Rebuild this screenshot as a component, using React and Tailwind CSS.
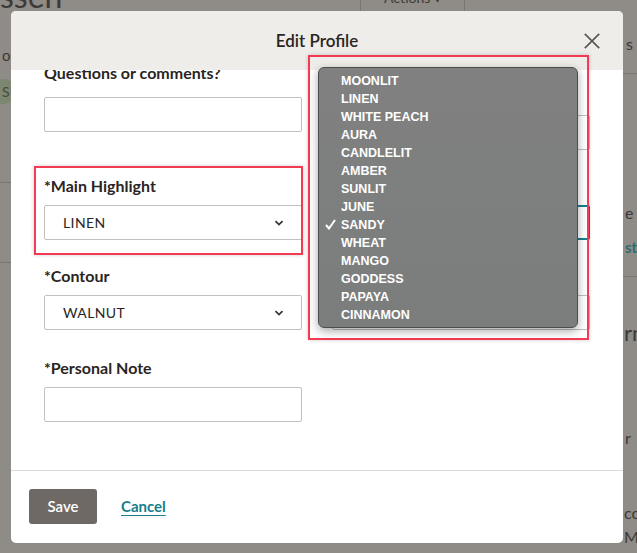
import React from 'react';

const shades = [
  'MOONLIT', 'LINEN', 'WHITE PEACH', 'AURA', 'CANDLELIT', 'AMBER', 'SUNLIT',
  'JUNE', 'SANDY', 'WHEAT', 'MANGO', 'GODDESS', 'PAPAYA', 'CINNAMON',
];

const Chevron = () => (
  <svg width="10" height="6" viewBox="0 0 10 6" className="shrink-0">
    <path d="M1.5 1.2 L5 4.6 L8.5 1.2" fill="none" stroke="#3a3532" strokeWidth="1.8" />
  </svg>
);

const Label = ({ children, className = '', mb = 'mb-[8px]' }) => (
  <div className={`h-[22px] leading-[22px] text-[16px] font-bold text-[#2a2522] ${mb} ${className}`}>
    {children}
  </div>
);

const SelectBox = ({ value, focused }) => (
  <div
    className={`h-[35px] flex items-center justify-between pl-[18px] pr-[17px] bg-white border rounded-[2px] ${
      focused ? 'border-[#1a7f8b] border-2' : 'border-[#c2c0bd]'
    }`}
  >
    <span className="text-[14px] tracking-[0.4px] text-[#2a2522]">{value}</span>
    {value && <Chevron />}
  </div>
);

const TextBox = () => (
  <div className="h-[35px] bg-white border border-[#c2c0bd] rounded-[2px]" />
);

export default function App() {
  return (
    <div
      className="relative w-[637px] h-[553px] overflow-hidden bg-[#8f8b87]"
      style={{ fontFamily: 'Lato, "Open Sans", sans-serif' }}
    >
      {/* page behind the overlay */}
      <div className="absolute left-0 top-[-20px] text-[32px] leading-none text-[#3d3936]">ssen</div>
      <div className="absolute left-[360px] top-0 w-[105px] h-[11px] border-x border-[#7a7672] flex justify-center">
        <span className="text-[14px] leading-none -mt-[9px] text-[#3d3936]">Actions ▾</span>
      </div>
      <div className="absolute left-[2px] top-[44px] text-[15px] text-[#3d3936]">o</div>
      <div className="absolute left-[-12px] top-[79px] h-[25px] pl-[14px] pr-[6px] rounded-full bg-[#7d8670] text-[14px] leading-[25px] text-[#454a3e]">S</div>
      <div className="absolute left-0 top-[182px] w-[11px] border-t border-[#7a7672]" />
      <div className="absolute left-0 top-[262px] w-[11px] border-t border-[#7a7672]" />

      <div className="absolute left-[626px] top-[32px] text-[16px] text-[#3d3936] whitespace-nowrap">s c</div>
      <div className="absolute left-[623px] top-[73px] w-[14px] border-t border-[#7a7672]" />
      <div className="absolute left-[625px] top-[201px] text-[16px] text-[#3d3936]">e</div>
      <div className="absolute left-[625px] top-[236px] text-[15px] font-bold text-[#2f6a6e]">st</div>
      <div className="absolute left-[623px] top-[276px] w-[14px] border-t border-[#7a7672]" />
      <div className="absolute left-[624px] top-[316px] text-[22px] text-[#3d3936]">rm</div>
      <div className="absolute left-[625px] top-[426px] text-[16px] text-[#3d3936]">r</div>
      <div className="absolute left-[624px] top-[501px] text-[16px] text-[#3d3936]">co</div>
      <div className="absolute left-[624px] top-[525px] text-[16px] text-[#3d3936]">Ma</div>

      {/* modal */}
      <div className="absolute left-[11px] top-[11px] w-[612px] h-[532px] bg-white rounded-[5px] flex flex-col overflow-hidden">
        <div className="relative h-[59px] shrink-0 bg-[#eeede9] flex items-center justify-center">
          <h1 className="text-[17px] font-semibold text-[#2a2522]">Edit Profile</h1>
          <button className="absolute right-[23px] top-[22px] w-[16px] h-[16px]">
            <svg width="16" height="16" viewBox="0 0 16 16">
              <path d="M0.8 0.8 L15.2 15.2 M15.2 0.8 L0.8 15.2" stroke="#5c5855" strokeWidth="1.7" fill="none" />
            </svg>
          </button>
        </div>

        <div className="flex-1 overflow-hidden">
          <div className="grid grid-cols-2 gap-x-[30px] px-[33px] -mt-[8px]">
            <div className="flex flex-col">
              <Label mb="mb-[13px]">Questions or comments?</Label>
              <TextBox />
              <Label className="mt-[43px]">*Main Highlight</Label>
              <SelectBox value="LINEN" />
              <Label className="mt-[25px]">*Contour</Label>
              <SelectBox value="WALNUT" />
              <Label className="mt-[27px]">*Personal Note</Label>
              <TextBox />
            </div>
            <div className="flex flex-col pt-[53px]">
              <TextBox />
              <div className="h-[55px]" />
              <SelectBox focused />
              <div className="h-[55px]" />
              <SelectBox />
            </div>
          </div>
        </div>

        <div className="h-[73px] shrink-0 border-t border-[#dcdad7] flex items-center gap-[24px] px-[18px] pb-[2px]">
          <button className="h-[35px] w-[68px] rounded-[3px] bg-[#6e6965] text-white text-[15px] font-semibold">
            Save
          </button>
          <a href="#" className="text-[15px] font-bold text-[#17808c] underline underline-offset-[3px]">
            Cancel
          </a>
        </div>
      </div>

      {/* annotation boxes */}
      <div className="absolute left-[34px] top-[166px] w-[269px] h-[89px] border-2 border-[#f33b53] shadow-[0_0_4px_rgba(0,0,0,0.2)]" />
      <div className="absolute left-[308px] top-[55px] w-[281px] h-[285px] border-2 border-[#f33b53] shadow-[0_0_4px_rgba(0,0,0,0.2)]" />

      {/* native select popup */}
      <div
        className="absolute left-[318px] top-[67px] w-[260px] h-[261px] rounded-[6px] border border-[#4d4d4d] bg-gradient-to-b from-[#808080] to-[#7b7d7d] shadow-[0_3px_10px_rgba(0,0,0,0.35)] pt-[4px] pl-[22px]"
        style={{ fontFamily: '"Liberation Sans", Arial, sans-serif' }}
      >
        {shades.map((s) => (
          <div key={s} className="relative h-[18px] leading-[18px] text-[12.5px] font-bold text-white">
            {s === 'SANDY' && (
              <svg width="11" height="11" viewBox="0 0 11 11" className="absolute left-[-16px] top-[3px]">
                <path d="M1 6 L4 9.5 L10 1" stroke="white" strokeWidth="2" fill="none" />
              </svg>
            )}
            {s}
          </div>
        ))}
      </div>
    </div>
  );
}
